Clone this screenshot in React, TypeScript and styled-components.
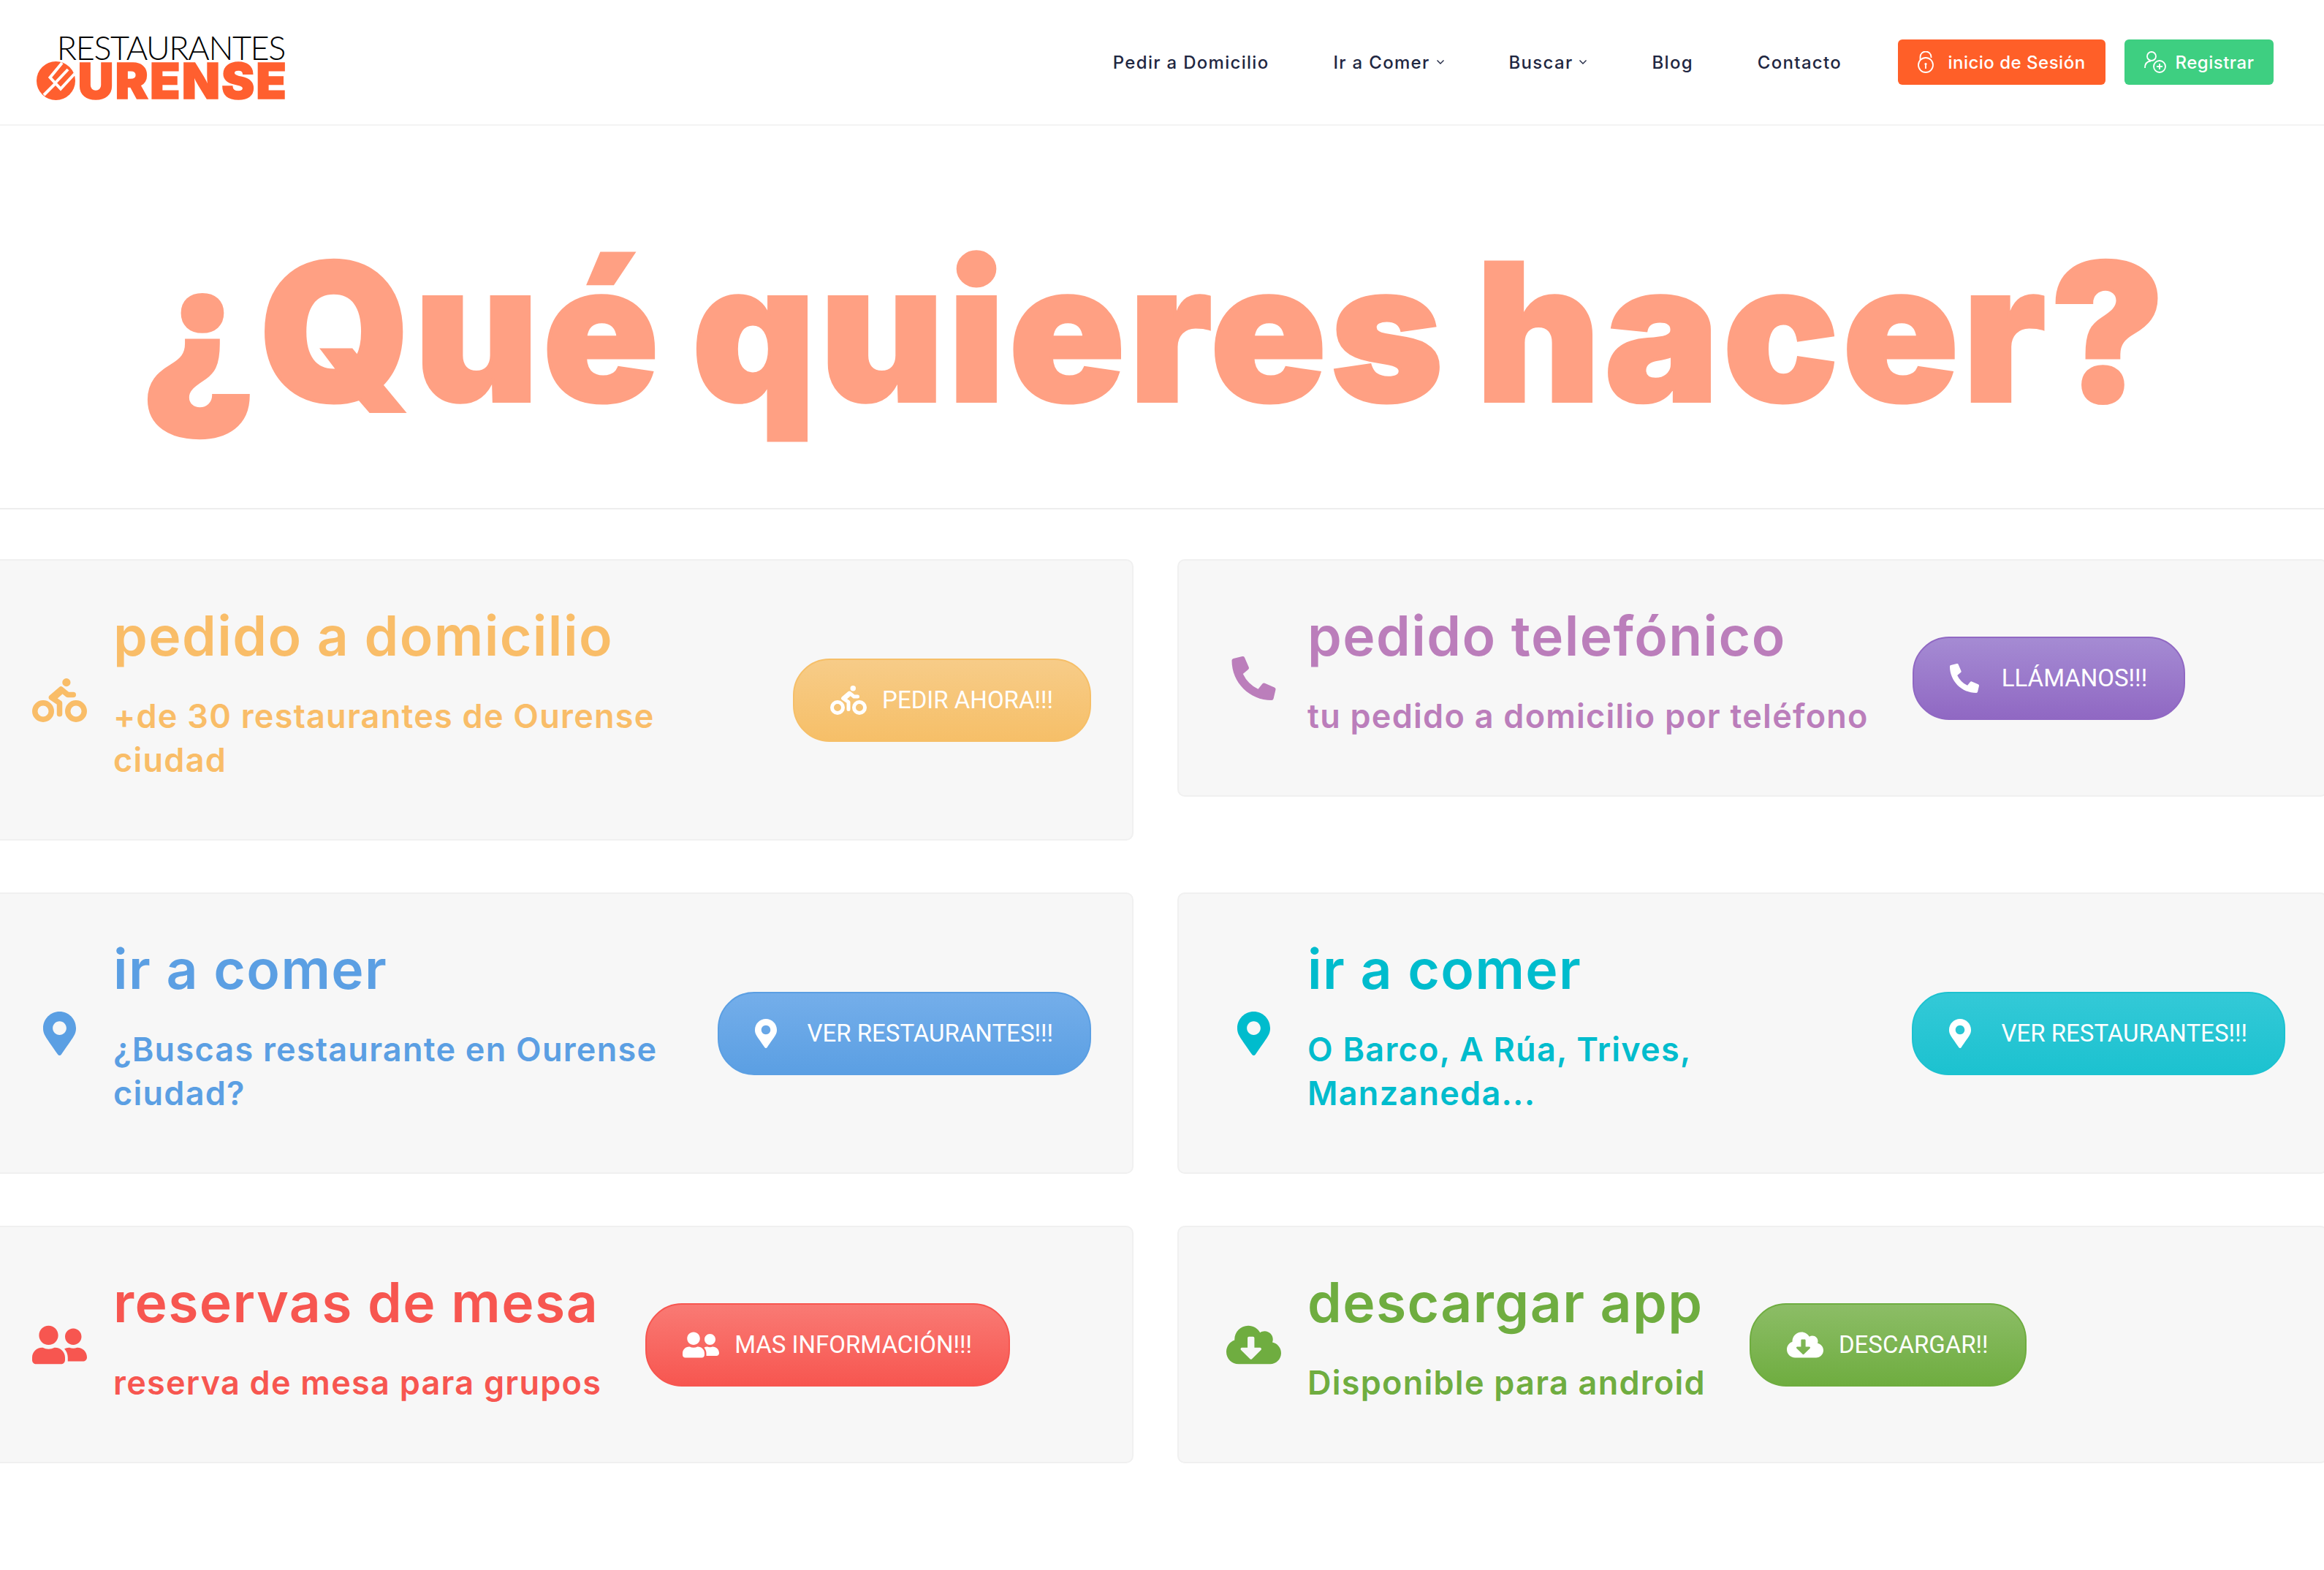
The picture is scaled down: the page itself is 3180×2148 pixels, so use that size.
import React from "react"
import styled, { createGlobalStyle } from "styled-components"
import { FaBiking, FaPhoneAlt, FaMapMarkerAlt, FaUserFriends, FaCloudDownloadAlt } from "react-icons/fa"
import type { IconType } from "react-icons"

const GlobalStyle = createGlobalStyle`
  html, body { margin: 0; padding: 0; background: #fff; overflow-x: hidden; }
  body { font-family: Inter, "Noto Sans", sans-serif; }
`

const Page = styled.div`
  width: 3180px;
  min-height: 2148px;
  overflow: hidden;
`

const Header = styled.header`
  height: 170px;
  display: flex;
  align-items: center;
  justify-content: space-between;
  padding: 0 69px 0 50px;
  border-bottom: 2px solid #f3f3f3;
`

const Logo = styled.div`
  display: flex;
  flex-direction: column;
  align-items: flex-end;
  width: 340px;
  margin-top: 14px;
`

const LogoTop = styled.div`
  font-family: Lato, sans-serif;
  font-weight: 300;
  font-size: 45px;
  line-height: 37px;
  letter-spacing: -1.4px;
  color: #000;
`

const LogoBottom = styled.div`
  display: flex;
  align-items: center;
  width: 100%;
  justify-content: space-between;
`

const LogoWord = styled.span`
  margin-right: -4px;
  font-family: Inter, sans-serif;
  font-weight: 900;
  font-size: 68px;
  line-height: 53px;
  letter-spacing: 2px;
  color: #ff5f2f;
  -webkit-text-stroke: 1.5px #ff5f2f;
`

const Nav = styled.nav`
  display: flex;
  align-items: center;
`

const NavLink = styled.a`
  display: flex;
  align-items: center;
  gap: 8px;
  margin-right: 88px;
  font-weight: 500;
  font-size: 24px;
  letter-spacing: 1.3px;
  color: #1f2742;
  white-space: nowrap;

  &:nth-child(5) { margin-right: 77px; }
`

const NavButton = styled.a<{ $bg: string; $w: number; $gap: number }>`
  display: flex;
  align-items: center;
  justify-content: center;
  gap: ${(p) => p.$gap}px;
  width: ${(p) => p.$w}px;
  height: 62px;
  margin-left: ${(p) => (p.$w > 250 ? 0 : 26)}px;
  border-radius: 6px;
  background: ${(p) => p.$bg};
  color: #fff;
  font-weight: 500;
  font-size: 24px;
  letter-spacing: 0.5px;
  white-space: nowrap;
`

const Hero = styled.section`
  height: 483px;
  padding: 40px 20px 0 0;
  display: flex;
  align-items: center;
  justify-content: center;
  border-bottom: 2px solid #ededed;
`

const HeroTitle = styled.h1`
  margin: 0;
  font-weight: 900;
  font-size: 262px;
  line-height: 1;
  letter-spacing: 5.6px;
  word-spacing: -18px;
  color: #ffa083;
  -webkit-text-stroke: 4px #ffa083;
  white-space: nowrap;
`

const Grid = styled.main`
  display: grid;
  grid-template-columns: 1574px 1574px;
  column-gap: 60px;
  row-gap: 71px;
  align-items: start;
  margin: 68px 0 0 -23px;
`

const Card = styled.article`
  display: flex;
  align-items: center;
  padding: 58px 56px 58px 65px;
  background: #f7f7f7;
  border: 2px solid #f0f0f0;
  border-radius: 10px;
`

const IconBox = styled.div<{ $color: string }>`
  flex: 0 0 75px;
  display: flex;
  justify-content: center;
  margin-right: 36px;
  color: ${(p) => p.$color};
  line-height: 0;

  svg { width: 75px; height: 60px; }
`

const Body = styled.div<{ $color: string }>`
  padding-bottom: 20px;
  color: ${(p) => p.$color};
`

const Title = styled.h2`
  margin: 0 0 35px;
  font-weight: 600;
  font-size: 75px;
  line-height: 90px;
  letter-spacing: 1.4px;
  white-space: nowrap;
`

const Subtitle = styled.p`
  margin: 0;
  font-weight: 600;
  font-size: 45px;
  line-height: 60px;
  letter-spacing: 1.25px;
`

const CallButton = styled.a<{ $top: string; $bottom: string }>`
  flex: none;
  display: flex;
  align-items: center;
  gap: 21px;
  height: 114px;
  box-sizing: border-box;
  margin-left: 60px;
  padding: 0 50px 0 49px;
  border: 2px solid ${(p) => p.$bottom};
  border-radius: 50px;
  background: linear-gradient(to bottom, ${(p) => p.$top}, ${(p) => p.$bottom});
  color: #fff;
  font-family: Roboto, sans-serif;
  font-size: 33px;
  text-transform: uppercase;
  white-space: nowrap;
`

const ButtonIcon = styled.span`
  display: flex;
  width: 50px;
  line-height: 0;

  svg { width: 50px; height: 40px; }
`

function LogoMark() {
  return (
    <svg width="53" height="53" viewBox="0 0 53 53">
      <circle cx="26.5" cy="26.5" r="26.5" fill="#ff5f2f" />
      <g fill="none" stroke="#fff" strokeWidth="4">
        <path d="M10 46 L25 31" />
        <path d="M35 2 L18.5 22 L33 37.5 L52 17" />
        <path d="M26 29 L43 11" />
      </g>
    </svg>
  )
}

function Chevron() {
  return (
    <svg width="12" height="8" viewBox="0 0 12 8" fill="none" stroke="#1f2742" strokeWidth="1.4">
      <path d="M1.5 1.5 L6 6 L10.5 1.5" />
    </svg>
  )
}

function LockIcon() {
  return (
    <svg width="22" height="30" viewBox="0 0 22 30" fill="none" stroke="#fff" strokeWidth="1.8">
      <circle cx="11" cy="19" r="10" />
      <path d="M3.5 12.5 V8 a7.5 7.5 0 0 1 15 0 V9" />
      <circle cx="11" cy="17.5" r="1.6" fill="#fff" stroke="none" />
      <path d="M11 18 V24" />
    </svg>
  )
}

function UserPlusIcon() {
  return (
    <svg width="30" height="30" viewBox="0 0 30 30" fill="none" stroke="#fff" strokeWidth="1.8">
      <circle cx="10" cy="7" r="6" />
      <path d="M1 23 C1 17 4 14 9 13.5" />
      <circle cx="21" cy="21" r="8" />
      <path d="M21 17 V25 M17 21 H25" />
    </svg>
  )
}

type Action = {
  icon: IconType
  title: string
  subtitle: string
  label: string
  color: string
  top: string
  bottom: string
}

const actions: Action[] = [
  { icon: FaBiking, title: "pedido a domicilio", subtitle: "+de 30 restaurantes de Ourense ciudad", label: "Pedir ahora!!!", color: "#f9bd68", top: "#f7cc88", bottom: "#f6bf68" },
  { icon: FaPhoneAlt, title: "pedido telefónico", subtitle: "tu pedido a domicilio por teléfono", label: "Llámanos!!!", color: "#bb7ebb", top: "#a58bd3", bottom: "#9068c3" },
  { icon: FaMapMarkerAlt, title: "ir a comer", subtitle: "¿Buscas restaurante en Ourense ciudad?", label: "Ver restaurantes!!!", color: "#5b9fe3", top: "#74aeea", bottom: "#5b9fe3" },
  { icon: FaMapMarkerAlt, title: "ir a comer", subtitle: "O Barco, A Rúa, Trives, Manzaneda...", label: "Ver restaurantes!!!", color: "#00bccd", top: "#33c9d7", bottom: "#1cc2d0" },
  { icon: FaUserFriends, title: "reservas de mesa", subtitle: "reserva de mesa para grupos", label: "Mas información!!!", color: "#f75650", top: "#f97a74", bottom: "#f75650" },
  { icon: FaCloudDownloadAlt, title: "descargar app", subtitle: "Disponible para android", label: "Descargar!!", color: "#6fad40", top: "#8cbd66", bottom: "#6fad40" },
]

export default function App() {
  return (
    <Page>
      <GlobalStyle />
      <Header>
        <Logo>
          <LogoTop>RESTAURANTES</LogoTop>
          <LogoBottom>
            <LogoMark />
            <LogoWord>URENSE</LogoWord>
          </LogoBottom>
        </Logo>
        <Nav>
          <NavLink>Pedir a Domicilio</NavLink>
          <NavLink>Ir a Comer <Chevron /></NavLink>
          <NavLink>Buscar <Chevron /></NavLink>
          <NavLink>Blog</NavLink>
          <NavLink>Contacto</NavLink>
          <NavButton $bg="#ff5f28" $w={284} $gap={19}><LockIcon /> inicio de Sesión</NavButton>
          <NavButton $bg="#3ecf81" $w={204} $gap={13}><UserPlusIcon /> Registrar</NavButton>
        </Nav>
      </Header>
      <Hero>
        <HeroTitle>¿Qué quieres hacer?</HeroTitle>
      </Hero>
      <Grid>
        {actions.map((a) => {
          const Icon = a.icon
          return (
            <Card key={a.subtitle}>
              <IconBox $color={a.color}><Icon /></IconBox>
              <Body $color={a.color}>
                <Title>{a.title}</Title>
                <Subtitle>{a.subtitle}</Subtitle>
              </Body>
              <CallButton $top={a.top} $bottom={a.bottom}>
                <ButtonIcon><Icon preserveAspectRatio="xMinYMid meet" /></ButtonIcon>
                {a.label}
              </CallButton>
            </Card>
          )
        })}
      </Grid>
    </Page>
  )
}
